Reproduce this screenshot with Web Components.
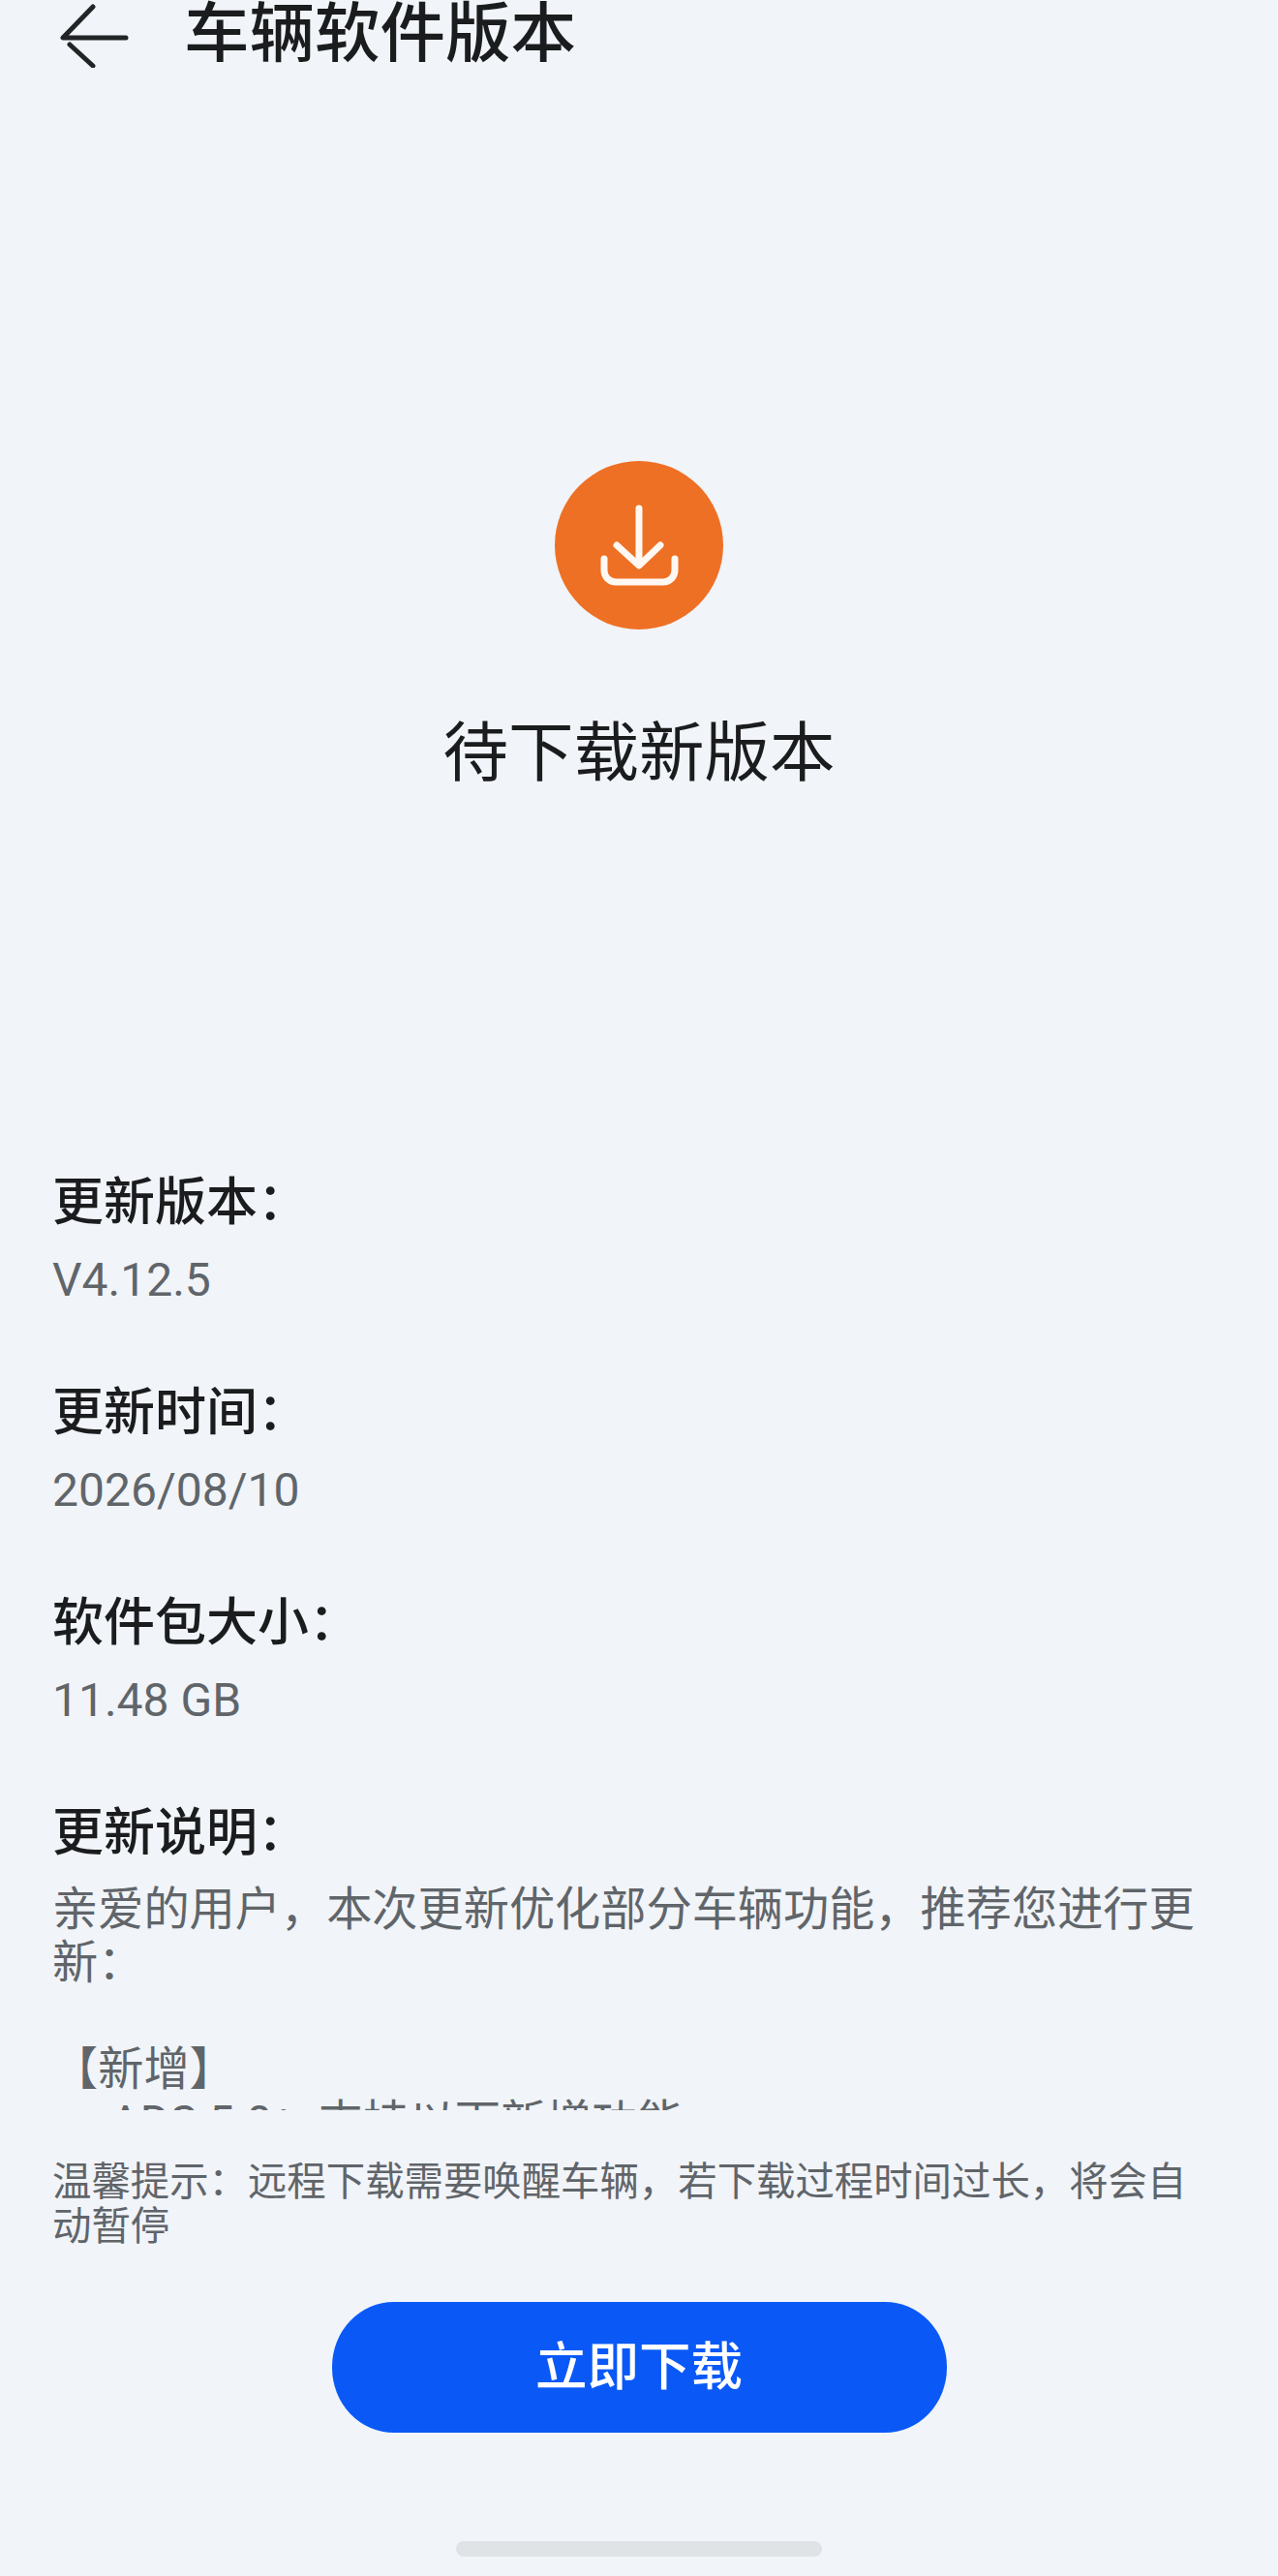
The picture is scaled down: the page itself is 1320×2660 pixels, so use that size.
<!DOCTYPE html>
<html lang="zh-CN">
<head>
<meta charset="utf-8">
<title>车辆软件版本</title>
<style>
html,body{margin:0;padding:0;background:#f1f4f8}
body{font-family:"Noto Sans CJK SC","Noto Sans",sans-serif}
</style>
</head>
<body>
<app-page>
  <app-header slot="header">车辆软件版本</app-header>
  <status-hero slot="hero">待下载新版本</status-hero>
  <info-item slot="info" label="更新版本：" value="V4.12.5"></info-item>
  <info-item slot="info" label="更新时间：" value="2026/08/10"></info-item>
  <info-item slot="info" label="软件包大小：" value="11.48 GB"></info-item>
  <release-notes slot="notes" label="更新说明：">
    <p>亲爱的用户，本次更新优化部分车辆功能，推荐您进行更新：</p>
    <p class="gap">【新增】</p>
    <p class="item">ADS 5.0：支持以下新增功能</p>
  </release-notes>
  <tip-text slot="tip">温馨提示：远程下载需要唤醒车辆，若下载过程时间过长，将会自动暂停</tip-text>
  <primary-button slot="action">立即下载</primary-button>
  <home-bar slot="home"></home-bar>
</app-page>
<script>
function el(name, html, init){
  customElements.define(name, class extends HTMLElement{
    constructor(){
      super();
      const r=this.attachShadow({mode:'open'});
      r.innerHTML=html;
      if(init) init(this,r);
    }
    connectedCallback(){ if(init) init(this,this.shadowRoot); }
  });
}
el('app-page',`<style>
:host{display:flex;flex-direction:column;width:1320px;height:2660px;overflow:hidden;background:#f1f4f8;box-sizing:border-box}
.info{display:flex;flex-direction:column;padding:0 54px;margin-top:393px}
.tipw{padding:0 90px 0 54px;margin-top:48px}
.act{display:flex;justify-content:center;margin-top:58px}
.home{display:flex;justify-content:center;margin-top:112px}
</style>
<slot name="header"></slot><slot name="hero"></slot>
<div class="info"><slot name="info"></slot><slot name="notes"></slot></div>
<div class="tipw"><slot name="tip"></slot></div>
<div class="act"><slot name="action"></slot></div>
<div class="home"><slot name="home"></slot></div>`);
el('app-header',`<style>
:host{display:flex;align-items:flex-start;height:72px;padding-left:60px;color:#1a1c1e;font-size:67.5px;font-weight:500;line-height:58px}
svg{display:block;flex:none;width:74px;height:66px;margin-right:56px;margin-top:4px}
span{display:block}
</style>
<svg viewBox="0 0 74 66" fill="none" stroke="#222426" stroke-width="5" stroke-linecap="round" stroke-linejoin="round"><path d="M36 3 5 35H70"/><path d="M12 42 36 64"/></svg>
<span><slot></slot></span>`);
el('status-hero',`<style>
:host{display:flex;flex-direction:column;align-items:center;margin-top:404px;color:#1b1c1e;font-size:67.5px;line-height:80px}
svg{display:block;width:174px;height:174px}
div{margin-top:82px}
</style>
<svg viewBox="0 0 174 174" fill="none"><circle cx="87" cy="87" r="87" fill="#ee7024"/><g stroke="#fff8f2" stroke-width="7" stroke-linecap="round" stroke-linejoin="round"><path d="M87 49V107"/><path d="M64 87 87 108 109 87"/><path d="M51 101V113a12 12 0 0 0 12 12H112a12 12 0 0 0 12-12V101"/></g></svg>
<div><slot></slot></div>`);
el('info-item',`<style>
:host{display:block;height:217px}
.l{font-size:53px;font-weight:500;line-height:64px;color:#1b1c1e}
.v{font-family:Roboto,"Noto Sans CJK SC",sans-serif;font-size:48px;font-weight:400;line-height:56px;margin-top:25px;color:#60656a}
</style><div class="l"></div><div class="v"></div>`,(h,r)=>{
  r.querySelector('.l').textContent=h.getAttribute('label')||'';
  r.querySelector('.v').textContent=h.getAttribute('value')||'';
});
el('release-notes',`<style>
:host{display:block}
.l{font-size:53px;font-weight:500;line-height:64px;color:#1b1c1e}
.b{height:234px;margin-top:25px;overflow:hidden;font-family:Roboto,"Noto Sans CJK SC",sans-serif;font-size:47.2px;line-height:55px;color:#60656a}
::slotted(p){margin:0}
::slotted(.gap){margin-top:55px}
::slotted(.item){padding-left:60px;margin-top:0}
</style><div class="l"></div><div class="b"><slot></slot></div>`,(h,r)=>{
  r.querySelector('.l').textContent=h.getAttribute('label')||'';
});
el('tip-text',`<style>
:host{display:block;font-size:40.4px;line-height:46px;color:#60656a}
</style><slot></slot>`);
el('primary-button',`<style>
:host{display:flex;align-items:center;justify-content:center;box-sizing:border-box;width:635px;height:135px;padding-bottom:10px;border-radius:64px/67px;background:#0a59f7;color:#fff;font-size:53.5px;font-weight:500;line-height:64px}
</style><slot></slot>`);
el('home-bar',`<style>
:host{display:block;width:378px;height:16px;border-radius:8px;background:#dfe3e6}
</style>`);
</script>
</body>
</html>
